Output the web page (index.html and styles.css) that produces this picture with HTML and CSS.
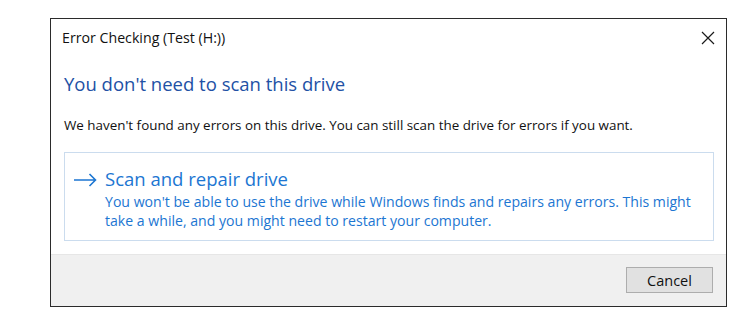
FILE: index.html
```html
<!DOCTYPE html>
<html>
<head>
<meta charset="utf-8">
<link rel="stylesheet" href="styles.css">
</head>
<body>
<div class="dialog">
  <div class="titlebar">
    <span class="title">Error Checking (Test (H:))</span>
    <svg class="close" width="14" height="14" viewBox="0 0 14 14"><path d="M1 1 L13 13 M13 1 L1 13" stroke="#1a1a1a" stroke-width="1.2" fill="none"/></svg>
  </div>
  <div class="content">
    <h1 class="heading">You don't need to scan this drive</h1>
    <p class="info">We haven't found any errors on this drive. You can still scan the drive for errors if you want.</p>
    <div class="option">
      <svg class="arrow" width="24" height="14" viewBox="0 0 24 14"><path d="M1 7 H22.5 M16.5 1 L22.5 7 L16.5 13" stroke="#1c76d2" stroke-width="1.6" fill="none"/></svg>
      <div class="option-text">
        <div class="option-title">Scan and repair drive</div>
        <div class="option-desc">You won't be able to use the drive while Windows finds and repairs any errors. This might take a while, and you might need to restart your computer.</div>
      </div>
    </div>
  </div>
  <div class="footer">
    <button class="btn">Cancel</button>
  </div>
</div>
</body>
</html>
```
FILE: styles.css
```css
html, body {
  margin: 0;
  padding: 0;
  background: #ffffff;
}
body {
  font-family: "Open Sans", "Noto Sans", sans-serif;
  color: #000;
}
.dialog {
  margin: 18px 0 0 50px;
  width: 675px;
  height: 287px;
  border: 1px solid #2b2b2b;
  display: flex;
  flex-direction: column;
  background: #fff;
}
.titlebar {
  height: 37px;
  display: flex;
  align-items: center;
  justify-content: space-between;
  padding: 0 11px 0 11px;
  box-sizing: border-box;
}
.title {
  font-size: 14.2px;
  line-height: 20px;
  color: #111;
}
.content {
  flex: 1;
  padding: 0 12px 0 13px;
}
.heading {
  margin: 16px 0 0 0;
  font-weight: normal;
  font-size: 18.5px;
  line-height: 24px;
  color: #2251a5;
}
.info {
  margin: 20px 0 0 0;
  font-size: 13.4px;
  line-height: 18px;
  color: #111;
}
.option {
  margin-top: 18px;
  border: 1px solid #cbdcee;
  height: 87px;
  display: flex;
  align-items: flex-start;
  padding: 0 0 0 8px;
}
.arrow {
  margin-top: 20px;
  flex: none;
}
.option-text {
  margin-left: 8px;
  margin-top: 14px;
  max-width: 592px;
}
.option-title {
  font-size: 18.5px;
  line-height: 24px;
  color: #1c76d2;
}
.option-desc {
  margin-top: 1px;
  font-size: 14.1px;
  line-height: 19px;
  color: #1c76d2;
}
.footer {
  height: 52px;
  background: #f0f0f0;
  border-top: 1px solid #e6e6e6;
  box-sizing: border-box;
  display: flex;
  justify-content: flex-end;
  align-items: flex-start;
  padding: 12px 13px 0 0;
}
.btn {
  width: 87px;
  height: 26px;
  background: #e1e1e1;
  border: 1px solid #adadad;
  font-family: "Open Sans", "Noto Sans", sans-serif;
  font-size: 14.5px;
  color: #111;
  padding: 0;
}
```
